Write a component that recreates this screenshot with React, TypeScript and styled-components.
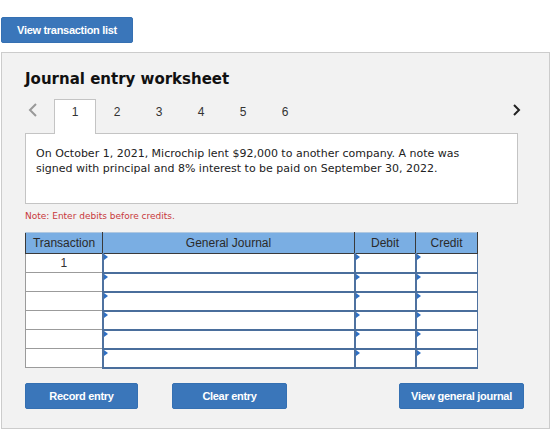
import * as React from 'react';
import styled, { createGlobalStyle } from 'styled-components';

const GlobalStyle = createGlobalStyle`
  body {
    margin: 0;
    background: #ffffff;
    font-family: 'DejaVu Sans', Verdana, sans-serif;
  }
`;

const Page = styled.div`
  width: 560px;
  height: 438px;
  overflow: hidden;
  padding-top: 17px;
  box-sizing: border-box;
`;

const BlueButton = styled.button<{ w: number }>`
  width: ${p => p.w}px;
  height: 26px;
  background: #3a76ba;
  color: #ffffff;
  border: 1px solid #3570b2;
  border-radius: 2px;
  font-family: 'Liberation Sans', Arial, sans-serif;
  font-weight: bold;
  font-size: 11px;
  letter-spacing: -0.3px;
  padding: 0;
  cursor: pointer;
`;

const TopButton = styled(BlueButton)`
  margin-left: 1px;
  display: block;
`;

const Panel = styled.div`
  margin: 9px 0 0 1px;
  width: 549px;
  height: 377px;
  box-sizing: border-box;
  background: #f2f2f2;
  border: 1px solid #cccccc;
  padding: 16px 0 0 23px;
`;

const Title = styled.h2`
  margin: 0;
  font-size: 15px;
  font-weight: bold;
  color: #111;
  height: 20px;
  line-height: 20px;
`;

const TabRow = styled.div`
  display: flex;
  align-items: stretch;
  width: 493px;
  height: 34px;
  margin-top: 10px;
  position: relative;
  z-index: 1;
`;

const Chevron = styled.div`
  width: 29px;
  display: flex;
  align-items: flex-start;
  padding: 3px 0 0 3px;
  box-sizing: border-box;
`;

const Tab = styled.div<{ active?: boolean }>`
  width: 42px;
  box-sizing: border-box;
  display: flex;
  align-items: flex-start;
  justify-content: center;
  padding-top: 5px;
  font-family: 'Liberation Sans', Arial, sans-serif;
  font-size: 12px;
  color: #333;
  background: ${p => (p.active ? '#ffffff' : 'transparent')};
  border: 1px solid ${p => (p.active ? '#c4c4c4' : 'transparent')};
  border-bottom: none;
  margin-bottom: ${p => (p.active ? '-1px' : '0')};
`;

const Spacer = styled.div`
  flex: 1;
`;

const RightChevron = styled.div`
  display: flex;
  align-items: flex-start;
  padding-top: 3px;
  margin-right: -4px;
`;

const Question = styled.div`
  width: 493px;
  height: 71px;
  box-sizing: border-box;
  background: #ffffff;
  border: 1px solid #c4c4c4;
  padding: 12px 56px 12px 10px;
  font-size: 11px;
  line-height: 15px;
  color: #222;
`;

const Note = styled.div`
  margin-top: 6px;
  font-size: 9px;
  color: #c8383b;
  height: 12px;
  line-height: 12px;
`;

const Table = styled.table`
  margin-top: 10px;
  border-collapse: collapse;
  table-layout: fixed;
`;

const Th = styled.th<{ w: number }>`
  width: ${p => p.w}px;
  height: 19px;
  padding: 0 0 1px;
  background: #7aaee3;
  border: 1px solid #3a3a3a;
  border-top-color: #b0c8e0;
  font-family: 'Liberation Sans', Arial, sans-serif;
  font-weight: normal;
  font-size: 12px;
  color: #2a2a2a;
`;

const IdCell = styled.td`
  height: 18px;
  padding: 0;
  background: #ffffff;
  border: 1px solid #9b9b9b;
  text-align: center;
  font-family: 'Liberation Sans', Arial, sans-serif;
  font-size: 12px;
  color: #333;
`;

const InputCell = styled.td`
  height: 17px;
  padding: 0;
  background: #ffffff;
  border-left: 2px solid #4f72a0;
  border-right: 1px solid #4f72a0;
  border-top: 1px solid #7f9cc4;
  border-bottom: 2px solid #4a6e9c;
  position: relative;
  &::before {
    content: '';
    position: absolute;
    left: 0;
    top: 0;
    border-top: 3px solid transparent;
    border-bottom: 3px solid transparent;
    border-left: 4px solid #2d6fc4;
  }
`;

const Actions = styled.div`
  display: flex;
  align-items: center;
  width: 499px;
  margin-top: 14px;
  gap: 34px;
`;

const rows = ['1', '', '', '', '', ''];

export default function App() {
  return (
    <Page>
      <GlobalStyle />
      <TopButton w={132}>View transaction list</TopButton>
      <Panel>
        <Title>Journal entry worksheet</Title>
        <TabRow>
          <Chevron>
            <svg width="10" height="16" viewBox="0 0 10 16" fill="none" stroke="#999" strokeWidth="2">
              <polyline points="8,2 2,8 8,14" />
            </svg>
          </Chevron>
          {[1, 2, 3, 4, 5, 6].map(n => (
            <Tab key={n} active={n === 1}>
              {n}
            </Tab>
          ))}
          <Spacer />
          <RightChevron>
            <svg width="10" height="16" viewBox="0 0 10 16" fill="none" stroke="#222" strokeWidth="2">
              <polyline points="2,3 7,8 2,13" />
            </svg>
          </RightChevron>
        </TabRow>
        <Question>
          On October 1, 2021, Microchip lent $92,000 to another company. A note was signed with principal and
          8% interest to be paid on September 30, 2022.
        </Question>
        <Note>Note: Enter debits before credits.</Note>
        <Table>
          <thead>
            <tr>
              <Th w={76}>Transaction</Th>
              <Th w={251}>General Journal</Th>
              <Th w={60}>Debit</Th>
              <Th w={61}>Credit</Th>
            </tr>
          </thead>
          <tbody>
            {rows.map((r, i) => (
              <tr key={i}>
                <IdCell>{r}</IdCell>
                <InputCell />
                <InputCell />
                <InputCell />
              </tr>
            ))}
          </tbody>
        </Table>
        <Actions>
          <BlueButton w={113}>Record entry</BlueButton>
          <BlueButton w={115}>Clear entry</BlueButton>
          <Spacer />
          <BlueButton w={125}>View general journal</BlueButton>
        </Actions>
      </Panel>
    </Page>
  );
}
